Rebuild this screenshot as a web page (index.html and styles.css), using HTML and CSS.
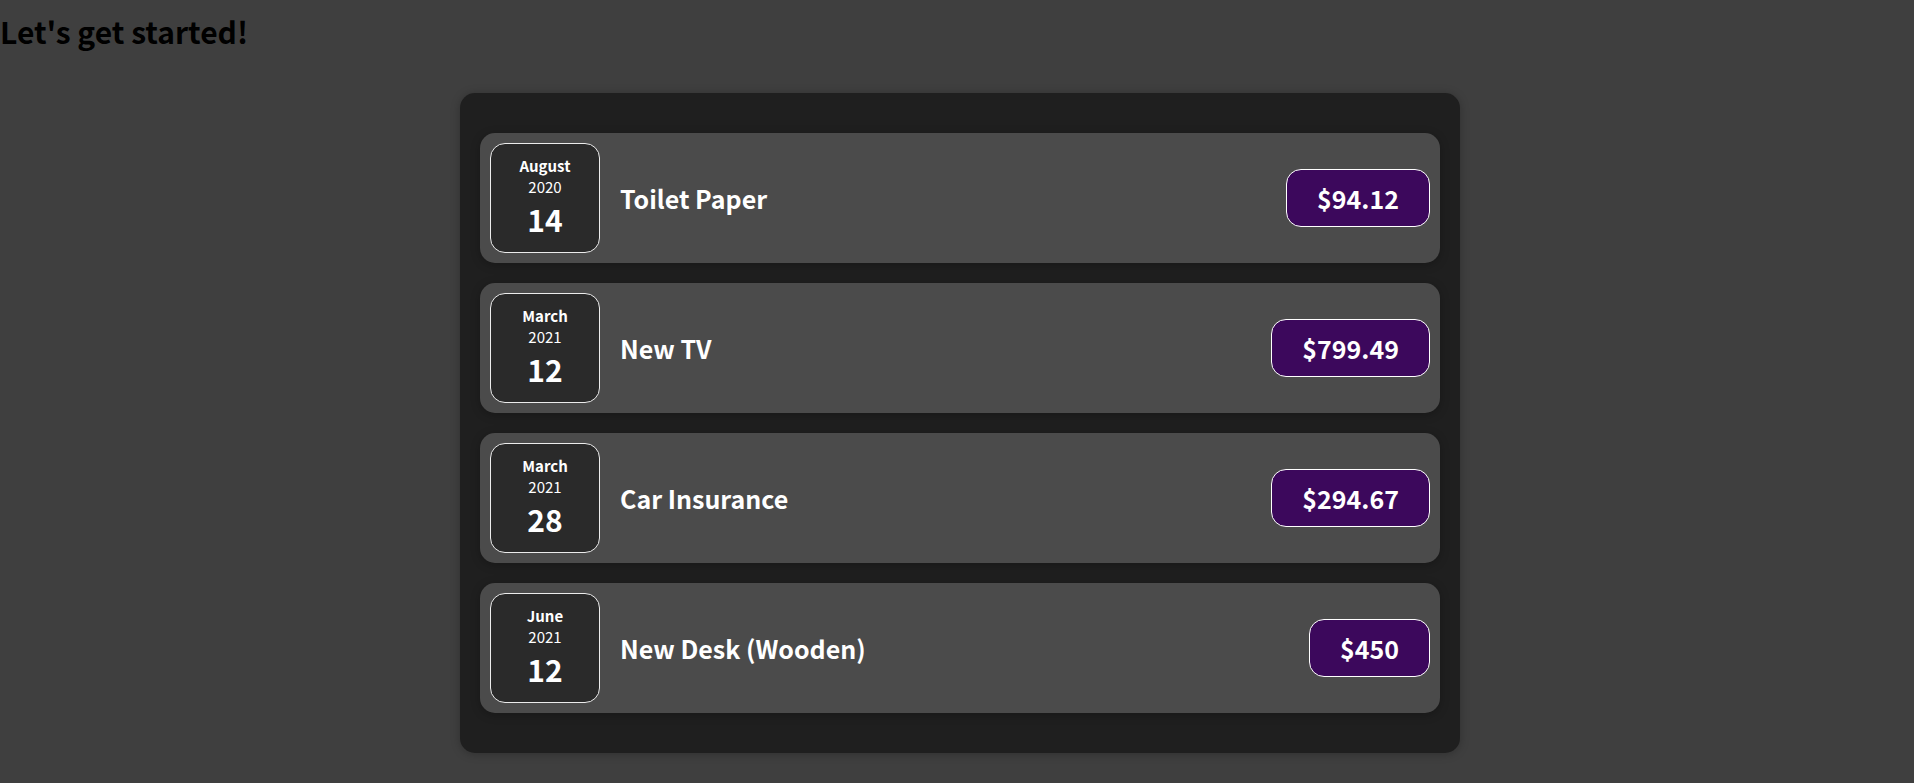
FILE: index.html
```html
<!DOCTYPE html>
<html lang="en">
<head>
<meta charset="utf-8">
<title>Expenses</title>
<link rel="stylesheet" href="styles.css">
</head>
<body>
  <div class="app">
    <h2 class="app-title">Let's get started!</h2>
    <div class="expenses card">
      <div class="expense-item card">
        <div class="expense-date">
          <div class="expense-date__month">August</div>
          <div class="expense-date__year">2020</div>
          <div class="expense-date__day">14</div>
        </div>
        <div class="expense-item__description">
          <h2>Toilet Paper</h2>
          <div class="expense-item__price">$94.12</div>
        </div>
      </div>
      <div class="expense-item card">
        <div class="expense-date">
          <div class="expense-date__month">March</div>
          <div class="expense-date__year">2021</div>
          <div class="expense-date__day">12</div>
        </div>
        <div class="expense-item__description">
          <h2>New TV</h2>
          <div class="expense-item__price">$799.49</div>
        </div>
      </div>
      <div class="expense-item card">
        <div class="expense-date">
          <div class="expense-date__month">March</div>
          <div class="expense-date__year">2021</div>
          <div class="expense-date__day">28</div>
        </div>
        <div class="expense-item__description">
          <h2>Car Insurance</h2>
          <div class="expense-item__price">$294.67</div>
        </div>
      </div>
      <div class="expense-item card">
        <div class="expense-date">
          <div class="expense-date__month">June</div>
          <div class="expense-date__year">2021</div>
          <div class="expense-date__day">12</div>
        </div>
        <div class="expense-item__description">
          <h2>New Desk (Wooden)</h2>
          <div class="expense-item__price">$450</div>
        </div>
      </div>
    </div>
  </div>
</body>
</html>
```

FILE: styles.css
```css
* {
  box-sizing: border-box;
}

html {
  font-family: "Noto Sans CJK JP", "Noto Sans", sans-serif;
}

body {
  margin: 0;
  background-color: #3f3f3f;
}

.app-title {
  margin: 9px 0 0;
  font-size: 30px;
  font-weight: bold;
  color: #000;
}

.card {
  border-radius: 15px;
  box-shadow: 0 1px 10px rgba(0, 0, 0, 0.25);
}

.expenses {
  padding: 20px;
  background-color: rgb(31, 31, 31);
  margin: 40px auto 40px calc(50% - 497px);
  width: 1000px;
  max-width: 95%;
}

.expense-item {
  display: flex;
  justify-content: space-between;
  align-items: center;
  box-shadow: 0 2px 10px rgba(0, 0, 0, 0.25);
  padding: 10px;
  margin: 20px 0;
  background-color: #4b4b4b;
}

.expense-item__description {
  display: flex;
  flex-direction: row;
  align-items: center;
  justify-content: flex-start;
  flex: 1;
}

.expense-item h2 {
  font-size: 25px;
  flex: 1;
  margin: 0 20px;
  color: white;
}

.expense-item__price {
  font-size: 25px;
  font-weight: bold;
  color: white;
  background-color: #3c085c;
  border: 1px solid white;
  padding: 10px 30px;
  border-radius: 15px;
}

.expense-date {
  display: flex;
  flex-direction: column;
  width: 110px;
  height: 110px;
  border: 1px solid #ececec;
  background-color: #2a2a2a;
  color: white;
  border-radius: 15px;
  align-items: center;
  justify-content: center;
  flex-shrink: 0;
}

.expense-date__month {
  font-size: 15px;
  font-weight: bold;
}

.expense-date__year {
  font-size: 15px;
}

.expense-date__day {
  font-size: 30px;
  font-weight: bold;
}
```
